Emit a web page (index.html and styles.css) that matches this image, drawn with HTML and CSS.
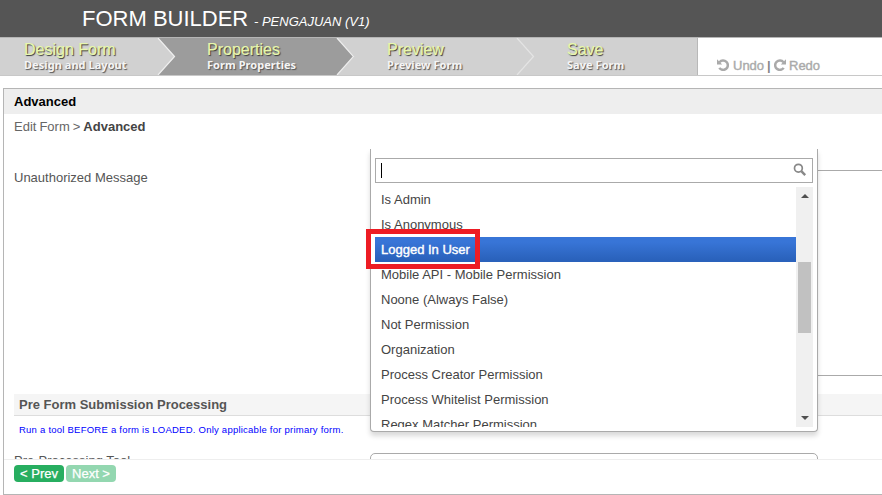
FILE: index.html
```html
<!DOCTYPE html>
<html lang="en">
<head>
<meta charset="utf-8">
<title>Form Builder</title>
<link rel="stylesheet" href="styles.css">
</head>
<body>
<header class="header"><h1>FORM BUILDER</h1><span class="form-name">- PENGAJUAN (V1)</span></header>
<nav class="nav">
  <ul class="steps">
    <li class="step"><b>Design Form</b><span>Design and Layout</span></li>
    <li class="step current"><b>Properties</b><span>Form Properties</span><svg class="chevron" width="20" height="37"><path class="fill-light" d="M0 0H1L18 18.500L1 37H0Z"/><path class="edge" d="M1 0L17.500 18.500L1 37"/></svg></li>
    <li class="step"><b>Preview</b><span>Preview Form</span><svg class="chevron" width="20" height="37"><path class="fill-dark" d="M0 0H1L18 18.500L1 37H0Z"/><path class="edge" d="M1 0L17.500 18.500L1 37"/></svg></li>
    <li class="step"><b>Save</b><span>Save Form</span><svg class="chevron" width="20" height="37"><path class="edge soft" d="M1 0L17.500 18.500L1 37"/></svg></li>
  </ul>
  <div class="history">
    <svg width="12" height="12" viewBox="0 0 12 12"><path class="arc" d="M2.500 3.200A4.700 4.700 0 1 1 2.300 8.900"/><path class="tip" d="M0 .2V5.400H5.200Z"/></svg>
    <span class="undo">Undo</span><span class="bar">|</span>
    <svg class="flip" width="12" height="12" viewBox="0 0 12 12"><path class="arc" d="M2.500 3.200A4.700 4.700 0 1 1 2.300 8.900"/><path class="tip" d="M0 .2V5.400H5.200Z"/></svg>
    <span class="redo">Redo</span>
  </div>
</nav>
<main class="panel">
  <h2 class="panel-title">Advanced</h2>
  <div class="crumbs">Edit Form &gt; <b>Advanced</b></div>
  <div class="scroll">
    <div class="row">
      <label>Unauthorized Message</label>
      <div class="textarea"></div>
    </div>
    <section class="section"><h3>Pre Form Submission Processing</h3></section>
    <p class="help">Run a tool BEFORE a form is LOADED. Only applicable for primary form.</p>
    <div class="tool-row"><label>Pre-Processing Tool</label><div class="select"></div></div>
    <div class="dropdown">
      <div class="search"><i class="caret"></i><svg width="14" height="14" viewBox="0 0 14 14"><circle cx="5.400" cy="5.200" r="3.900"/><path d="M8.300 8.200L12.200 12.100"/></svg></div>
      <div class="results">
        <ul class="options">
          <li>Is Admin</li><li>Is Anonymous</li><li class="highlighted">Logged In User</li><li>Mobile API - Mobile Permission</li><li>Noone (Always False)</li><li>Not Permission</li><li>Organization</li><li>Process Creator Permission</li><li>Process Whitelist Permission</li><li>Regex Matcher Permission</li>
        </ul>
        <div class="scrollbar"><svg width="8" height="4"><path d="M0 4L4 0L8 4Z"/></svg><i class="thumb"></i><svg class="down" width="8" height="4"><path d="M0 0L4 4L8 0Z"/></svg></div>
      </div>
      <div class="marker"></div>
    </div>
  </div>
  <footer class="footer"><button>&lt; Prev</button><button class="disabled">Next &gt;</button></footer>
</main>
</body>
</html>
```
FILE: styles.css
```css
* { box-sizing: border-box; }
body { margin: 0; height: 495px; overflow: hidden; background: #fff; font: 13px "Liberation Sans", Arial, sans-serif; color: #444; }
h1, h2, h3, p, ul { margin: 0; padding: 0; }
ul { list-style: none; }
svg { display: block; }
.header { height: 37px; padding-left: 82px; background: #555; color: #fff; display: flex; align-items: baseline; line-height: 37px; }
h1 { font-size: 22px; font-weight: 400; width: 172px; white-space: nowrap; }
.form-name { font-size: 13px; font-style: italic; }
.nav { height: 39px; border-top: 1px solid #b5b5b5; border-bottom: 1px solid #c8c8c8; display: flex; }
.steps { display: flex; width: 698px; background: #d1d1d1; border-right: 1px solid #b8b8b8; }
.step { position: relative; width: 180px; padding: 3px 0 0 50px; color: #fff; background: #d1d1d1; }
.step:first-child { width: 157px; padding-left: 24px; }
.step:nth-child(2) { width: 179px; }
.step:nth-child(3), .step:last-child { padding-left: 51px; }
.step b { display: block; font-size: 16px; line-height: 18px; font-weight: 400; color: #e8f7ad; text-shadow: 1px 1px 1px #333; -webkit-text-stroke: .2px #e8f7ad; }
.step span { display: block; font: 700 11px/12px "Noto Sans", sans-serif; letter-spacing: .05px; color: #f5f5f5; text-shadow: 1px 1px 1px #555; white-space: nowrap; }
.current { background: #9c9c9c; }
.chevron { position: absolute; left: 0; top: 0; }
.fill-light { fill: #d1d1d1; }
.fill-dark { fill: #9c9c9c; }
.edge { fill: none; stroke: #eee; stroke-width: 1.2; }
.soft { stroke: #e4e4e4; }
.history { display: flex; align-items: center; padding: 17px 0 0 19px; color: #aaa; height: 37px; font-weight: 400; }
.arc { fill: none; stroke: #aaa; stroke-width: 2.5; }
.tip { fill: #aaa; }
.flip { transform: scaleX(-1); }
.undo { margin-left: 4px; width: 34px; }
.bar { width: 7px; color: #888; font-weight: 700; }
.redo { margin-left: 3px; }
.undo, .redo { -webkit-text-stroke: .4px #aaa; }
.panel { margin: 12px 0 0 3px; height: 407px; border: 1px solid #b5b5b5; border-right: 0; display: flex; flex-direction: column; }
.panel-title { height: 25px; padding-left: 10px; background: #eee; color: #000; font-size: 13px; line-height: 25px; }
.crumbs { height: 35px; padding-left: 10px; line-height: 25px; color: #666; word-spacing: -.6px; }
.crumbs b { color: #444; }
.scroll { position: relative; height: 310px; overflow: hidden; padding-left: 10px; }
.row { display: flex; height: 245px; padding-top: 21px; }
.row label { width: 356px; line-height: 15px; color: #555; }
.textarea { flex: 1; height: 206px; border: 1px solid #aaa; border-right: 0; }
.section { height: 22px; background: #f5f5f5; border-bottom: 1px solid #ddd; padding-left: 5px; }
.section h3 { font-size: 13px; line-height: 21px; color: #555; }
.help { height: 37px; padding: 7px 0 0 5px; font-size: 9.5px; letter-spacing: .235px; line-height: 13px; color: #00f; }
.tool-row { display: flex; color: #555; line-height: 15px; }
.tool-row label { width: 356px; }
.select { width: 448px; height: 25px; border: 1px solid #aaa; border-radius: 5px; }
.dropdown { position: absolute; left: 366px; top: 0; width: 448px; height: 283px; padding: 9px 4px 4px; background: #fff; border: 1px solid #aaa; border-top: 0; border-radius: 0 0 4px 4px; box-shadow: 0 4px 5px rgba(0,0,0,.15); }
.search { height: 25px; border: 1px solid #aaa; display: flex; justify-content: space-between; padding: 4px 5px; }
.caret { width: 1px; height: 15px; background: #000; }
.search svg { fill: none; stroke: #888; stroke-width: 1.7; }
.search svg path { stroke-width: 2.4; }
.results { display: flex; height: 240px; margin-top: 4px; overflow: hidden; }
.options { flex: 1; }
.options li { height: 25px; padding-left: 6px; line-height: 25px; white-space: nowrap; }
.options .highlighted { background: linear-gradient(#3875d7 20%, #2a62bc 90%); color: #fff; -webkit-text-stroke: .4px #fff; }
.scrollbar { width: 17px; background: #f0f0f0; display: flex; flex-direction: column; align-items: center; padding: 7px 0; fill: #505050; }
.thumb { width: 13px; height: 71px; margin-top: 64px; background: #c1c1c1; }
.down { margin-top: auto; }
.marker { position: absolute; left: -5px; top: 80px; width: 114px; height: 40px; border: 5px solid #ed1c24; }
.footer { height: 35px; border-top: 1px solid #eee; padding: 5px 0 0 10px; display: flex; gap: 2px; }
button { width: 50px; height: 17px; padding: 0; border: 0; border-radius: 4px; background: #27ae60; color: #fff; font: 13px/17px "Liberation Sans", Arial, sans-serif; white-space: nowrap; -webkit-text-stroke: .25px #fff; }
.disabled { background: #93d7b0; }
```
